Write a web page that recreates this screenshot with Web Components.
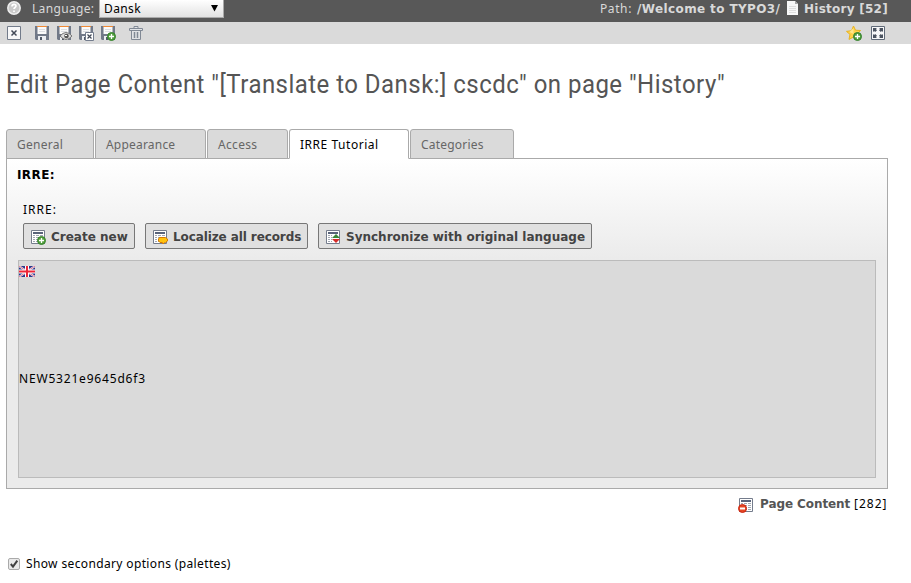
<!DOCTYPE html>
<html lang="en">
<head>
<meta charset="utf-8">
<title>Edit Page Content</title>
<style>
html,body{margin:0;height:583px;overflow:hidden;background:#fff}
body{font:12px/16px "Noto Sans","DejaVu Sans",sans-serif;color:#000}
</style>
</head>
<body>
<backend-app></backend-app>
<script>
const define = (name, html, setup) => customElements.define(name, class extends HTMLElement {
  constructor() {
    super();
    this.attachShadow({mode: 'open'}).innerHTML = html;
  }
  connectedCallback() { if (setup) setup(this); }
});

/* Text run with a fixed advance width: tracking is spread over its characters. */
define('text-run', `<style>
:host{display:inline-block;white-space:pre;flex:none}
:host([bold]){font-family:"DejaVu Sans",sans-serif;font-weight:700;font-size:12px}
span{display:inline-block}
</style><span><slot></slot></span>`, el => {
  const span = el.shadowRoot.querySelector('span');
  const w = +el.getAttribute('w');
  span.style.letterSpacing = (w - span.offsetWidth) / el.textContent.length + 'px';
  el.style.width = w + 'px';
});

const disk = `<path d="M1 1h14v14H2l-1-1z" fill="#717988"/><path d="M3.500 2h9v7h-9z" fill="#fafafa"/><path d="M3 1.500h10" stroke="#f08a35"/><path d="M5 4.500h6M5 6.500h6" stroke="#dcdee2"/><path d="M4 11h8v4H4z" fill="#eceef2"/><path d="M6 12h2v3H6z" fill="#515a68"/>`;
const list = `<path d="M1.500 1.500h13v13h-13z" fill="#fff" stroke="#747c8c"/><path d="M3 4h10" stroke="#59637a" stroke-width="2"/><path d="M3 6.500h10M3 8.500h10M3 10.500h10M3 12.500h10" stroke="#a0a6b1" stroke-dasharray="2 1 3 1 3 0"/>`;
const plus = `<circle cx="11.500" cy="11.500" r="4" fill="#519e3c" stroke="#35822e"/><path d="M9 11.500h5M11.500 9v5" stroke="#fff" stroke-width="1.300"/>`;
const icons = {
  help: `<circle cx="8" cy="8" r="6.200" fill="#c9c9c9" stroke="#eee" stroke-width="1.500"/><path d="M6 6.600c0-3 4-2.800 4-.6 0 1.500-2 1.400-2 3M8 10.600v1.400" fill="none" stroke="#fff" stroke-width="1.700"/>`,
  close: `<path d="M1.500 1.500h13v13h-13z" fill="#f7f7f8" stroke="#727b8a"/><path d="M5.500 5.500l5 5M10.500 5.500l-5 5" stroke="#424957" stroke-width="1.500"/>`,
  save: disk,
  view: disk + `<path d="M4 11q6-7 12 0-6 7-12 0z" fill="#dedede" stroke="#777"/><circle cx="10.500" cy="11" r="2.300" fill="#555"/><path d="M9 10.500h2" stroke="#fff"/>`,
  saveclose: disk + `<path d="M7.500 7.500h8v8h-8z" fill="#fff" stroke="#737c8d"/><path d="M9.500 9.500l4 4M13.500 9.500l-4 4" stroke="#424957" stroke-width="1.200"/>`,
  savenew: disk + plus,
  trash: `<path d="M6 3V1.500h4V3M1.500 3.500h13v2h-13zM3.500 5.500v9h9v-9" fill="#e1e3e6" stroke="#818995"/><path d="M6.500 7v6M9.500 7v6" stroke="#818995" stroke-width="1.500"/>`,
  page: `<path d="M2 1h8l3 3v11H2z" fill="#f8f8f8"/><path d="M10 1v3h3z" fill="#a6a6a6"/><path d="M4 6.500h7M4 8.500h7M4 10.500h7M4 12.500h7" stroke="#dedede"/>`,
  star: `<path d="M7.500 1l2 4.200 5 .3L11 9.200l1 5L7.500 12 3 14.400l1-5L.5 6.400l5-.7z" fill="#ffd24a" stroke="#e8b320"/><path d="M7.500 3v6l-4-2z" fill="#ffe88b"/>` + plus,
  expand: `<path d="M1.500 1.500h13v13h-13z" fill="#f7f7f8" stroke="#606a78"/><path d="M3 3h4L5.900 4.100 7 5.200 5.200 7 4.100 5.900 3 7zM13 3H9l1.100 1.100L9 5.200 10.800 7l1.100-1.100L13 7zM3 13h4l-1.100-1.100L7 10.800 5.200 9l-1.100 1.100L3 9zM13 13H9l1.100-1.100L9 10.800 10.800 9l1.100 1.100L13 9z" fill="#4b5360"/>`,
  listnew: list + plus,
  localize: list + `<path d="M7.500 8.500h6l2 1.500v2l-2 1.500h-1L11 15l-.5-1.500H8L6.500 12v-2z" fill="#ffc20b" stroke="#d87a00"/>`,
  sync: list + `<path d="M7 5h7v9H7z" fill="#fff"/><path d="M11 5l4 4H7z" fill="#388536"/><path d="M7 10h8l-4 4z" fill="#d52b28"/>`,
  remove: list + `<circle cx="4.500" cy="11.500" r="4" fill="#e54623" stroke="#c92613"/><path d="M2 11.500h5" stroke="#fff" stroke-width="2"/>`,
  flag: `<path d="M0 3h16v11H0z" fill="#2b3789"/><path d="M0 3l16 11M16 3L0 14" stroke="#eef" stroke-width="1.900"/><path d="M0 3l16 11M16 3L0 14" stroke="#e05563" stroke-width=".8"/><path d="M8 3v11M0 8.500h16" stroke="#fff" stroke-width="4"/><path d="M8 3v11M0 8.500h16" stroke="#ed2638" stroke-width="2"/>`
};
define('ui-icon', `<style>:host{display:block;width:16px;height:16px;flex:none}svg{display:block}</style><svg width="16" height="16" viewBox="0 0 16 16"></svg>`,
  el => el.shadowRoot.querySelector('svg').innerHTML = icons[el.getAttribute('name')]);

define('ui-select', `<style>
:host{display:flex;box-sizing:border-box;width:125px;height:18px;border:1px solid #aaa;border-top:0;background:linear-gradient(#fff,#e2e2e2);color:#000;padding:0 5px 0 4px;justify-content:space-between;line-height:17px}
svg{margin-top:5px}
</style><slot></slot><svg width="7" height="7"><path d="M0 0h7L3.500 6.500z" fill="#000"/></svg>`);

define('top-bar', `<style>
:host{display:flex;height:22px;background:#585858;color:#d9d9d9;padding:0 23px 0 6px;box-sizing:border-box;line-height:17px}
.path{line-height:18px}
.gap{flex:1}
ui-select{margin-left:5px}
[name=help]{margin-right:10px}[name=page]{margin:0 3px 0 5px}
</style>
<ui-icon name="help"></ui-icon><text-run w="62">Language:</text-run>
<ui-select><text-run w="37">Dansk</text-run></ui-select><div class="gap"></div>
<text-run w="32">Path:</text-run><text-run class="path" style="margin-left:5px" bold w="143">/Welcome to TYPO3/</text-run><ui-icon name="page"></ui-icon><text-run class="path" bold w="84">History [52]</text-run>`);

define('tool-bar', `<style>
:host{display:flex;align-items:center;height:22px;background:#dadada;padding:0 25px 0 6px;box-sizing:border-box}
.group{display:flex;gap:6px;margin-left:12px}.gap{flex:1}[name=trash]{margin-left:12px}[name=expand]{margin-left:8px}
</style><ui-icon name="close"></ui-icon><div class="group"><ui-icon name="save"></ui-icon><ui-icon name="view"></ui-icon><ui-icon name="saveclose"></ui-icon><ui-icon name="savenew"></ui-icon></div><ui-icon name="trash"></ui-icon><div class="gap"></div><ui-icon name="star"></ui-icon><ui-icon name="expand"></ui-icon>`);

define('tab-item', `<style>
:host{display:block;box-sizing:border-box;height:30px;border:1px solid #aaa;border-radius:3px 3px 0 0;background:#dadada;color:#666;padding:7px 0 0 10px}
:host([active]){background:#fff;border-bottom-color:#fff;color:#000}
</style><slot></slot>`);

define('tab-strip', `<style>
:host{display:flex;gap:1px;margin-bottom:-1px;position:relative}
</style><slot></slot>`);

define('ui-button', `<style>
:host{display:flex;align-items:center;box-sizing:border-box;height:26px;border:1px solid #777;border-radius:2px;background:#e0e0e0;color:#434343;padding:1px 6px 0 6px;gap:5px}
</style><slot></slot>`);

define('tab-panel', `<style>
:host{display:flex;flex-direction:column;box-sizing:border-box;height:331px;border:1px solid #aaa;background:linear-gradient(#fff,#ebebeb 100px);padding:8px 11px 10px}
.title{margin-left:-1px}.label{margin:19px 0 0 5px}
.buttons{display:flex;gap:10px;margin:5px 0 11px 5px}
.records{flex:1;border:1px solid #bbb;background:#dadada}
.id{margin-top:92px}
[name=flag]{margin-top:2px}
</style>
<text-run class="title" bold w="38">IRRE:</text-run>
<text-run class="label" w="34">IRRE:</text-run>
<div class="buttons">
<ui-button><ui-icon name="listnew"></ui-icon><text-run bold w="77">Create new</text-run></ui-button>
<ui-button><ui-icon name="localize"></ui-icon><text-run bold w="128">Localize all records</text-run></ui-button>
<ui-button><ui-icon name="sync"></ui-icon><text-run bold w="239">Synchronize with original language</text-run></ui-button>
</div>
<div class="records"><ui-icon name="flag"></ui-icon><text-run class="id" w="127">NEW5321e9645d6f3</text-run></div>`);

define('check-option', `<style>
:host{display:flex;align-items:center;gap:6px}
</style><svg width="12" height="12"><rect x=".5" y=".5" width="11" height="11" rx="1.500" fill="#e9e9e9" stroke="#aaa"/><path d="M2.800 6l2.200 2.600 4.300-6" fill="none" stroke="#404040" stroke-width="2"/></svg><slot></slot>`);

define('backend-app', `<style>
:host{display:block;height:583px}
main{padding:0 23px 0 6px}
h1{margin:24px 0 0;font:400 25.5px/32px Roboto,sans-serif;color:#555;height:61px;width:720px}
h1 text-run{transform-origin:0 0;transform:scaleX(.94)}
.ref{display:flex;justify-content:flex-end;margin-top:7px}
.ref ui-icon{margin:1px 6px 0 0}
check-option{margin:43px 0 0 2px}
</style>
<top-bar></top-bar><tool-bar></tool-bar>
<main>
<h1><text-run w="765">Edit Page Content "[Translate to Dansk:] cscdc" on page "History"</text-run></h1>
<tab-strip>
<tab-item style="width:88px"><text-run w="46">General</text-run></tab-item>
<tab-item style="width:111px"><text-run w="69">Appearance</text-run></tab-item>
<tab-item style="width:81px"><text-run w="39">Access</text-run></tab-item>
<tab-item active style="width:120px"><text-run w="79">IRRE Tutorial</text-run></tab-item>
<tab-item style="width:104px"><text-run w="63">Categories</text-run></tab-item>
</tab-strip>
<tab-panel></tab-panel>
<div class="ref"><ui-icon name="remove"></ui-icon><text-run bold style="color:#555" w="90">Page Content</text-run><text-run w="34" style="margin-left:4px">[282]</text-run></div>
<check-option><text-run w="205">Show secondary options (palettes)</text-run></check-option>
</main>`);
</script>
</body>
</html>
